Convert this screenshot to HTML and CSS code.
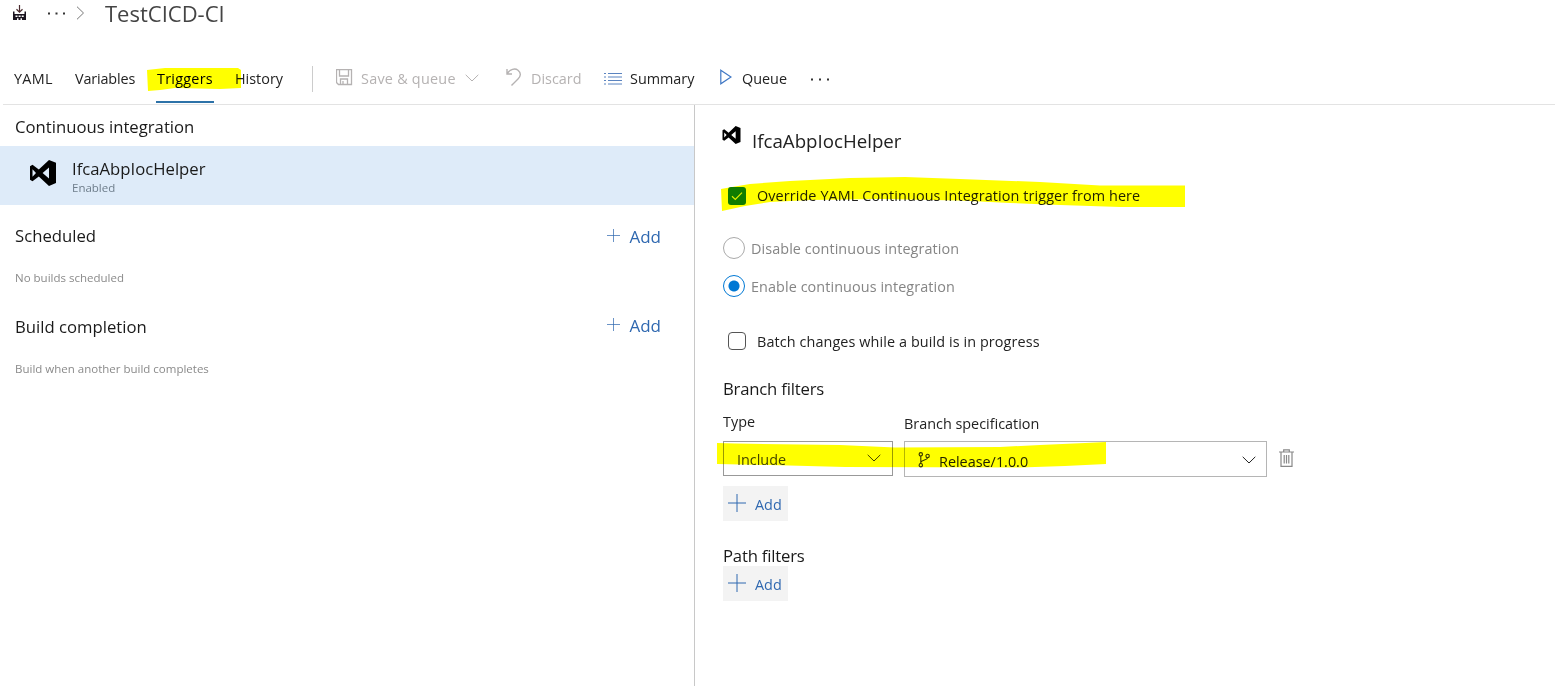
FILE: index.html
```html
<!DOCTYPE html>
<html lang="en">
<head>
<meta charset="utf-8">
<title>TestCICD-CI</title>
<link rel="stylesheet" href="styles.css">
</head>
<body>
<svg class="defs" width="0" height="0">
  <symbol id="vs" viewBox="0 0 26 26"><path fill="#000" fill-rule="evenodd" d="M19 0 26 2.800V23L19 26 8.800 16.600 2.500 21.300 0 19.800V6.200L2.500 4.700 8.800 9.600ZM19 7.500 12.600 13 19 18.500ZM2.500 9.300V16.700L6 13Z"/></symbol>
  <symbol id="plus" viewBox="0 0 18 18"><path d="M9 0V18M0 9H18" fill="none" stroke="currentColor"/></symbol>
  <symbol id="chev" viewBox="0 0 14 8"><path d="M.7.8 7 7 13.3.8" fill="none" stroke="currentColor"/></symbol>
</svg>
<header class="top">
  <div class="crumbs">
    <svg class="factory" width="15" height="16" viewBox="0 0 15 16"><path d="M1 6.500H2.500V9H12.500V6.500H14V15H1Z" fill="#1b1520"/><path d="M3.500 10.500h2v1.500h-2zM6.600 10.500h2v1.500h-2zM9.700 10.500h2v1.500h-2zM5 13.300h1.500V15H5zM8.500 13.300H10V15H8.500z" fill="#fff"/><path d="M7.500 0V7M4.500 4.300 7.500 7.200 10.500 4.300" fill="none" stroke="#4a2a2e" stroke-width="1.200"/></svg>
    <svg class="dots" width="18" height="3" viewBox="0 0 18 3"><path d="M0 .5h2v2H0zM7.500.5h2v2h-2zM15 .5h2v2h-2z" fill="#333"/></svg>
    <svg class="crumb-arrow" width="9" height="14" viewBox="0 0 9 14"><path d="M1 .7 7.500 7 1 13.300" fill="none" stroke="#777"/></svg>
    <h1>TestCICD-CI</h1>
  </div>
  <nav class="tabs">
    <a class="yaml">YAML</a><a class="vars">Variables</a><a class="current">Triggers</a><a>History</a>
    <i class="sep"></i>
    <svg class="up off" width="17" height="17" viewBox="0 0 17 17"><path d="M.5.5H15.500V15.500H2.500L.5 13.500ZM3.500.5V7H12.500V.5M4.500 15V10H11.500V15M7 15V12" fill="none" stroke="currentColor" stroke-width="1.300"/></svg>
    <span class="off save"><span>Save &amp; queue</span><svg width="14" height="8"><use href="#chev"/></svg></span>
    <svg class="up off" width="16" height="18" viewBox="0 0 16 18"><path d="M1 1V6H6M1.200 5.800C4 1 9 0 12 2.200 15.500 5 14.600 8.500 12 11L5.500 17.500" fill="none" stroke="currentColor" stroke-width="1.400"/></svg>
    <span class="off">Discard</span>
    <svg width="19" height="12" viewBox="0 0 19 12"><path d="M0 .5H2M4 .5H18M0 4H2M4 4H18M0 7.500H2M4 7.500H18M0 11H2M4 11H18" stroke="#5b84c0" fill="none"/></svg>
    <span>Summary</span>
    <svg class="up" width="12" height="16" viewBox="0 0 12 16"><path d="M.8 1.200 11 8 .8 14.800Z" fill="none" stroke="#3f77c4" stroke-width="1.200"/></svg>
    <span>Queue</span>
    <svg class="more" width="19" height="3" viewBox="0 0 19 3"><path d="M0 .5h2v2H0zM8 .5h2v2H8zM16 .5h2v2h-2z" fill="#333"/></svg>
  </nav>
</header>
<main>
  <section class="list">
    <div class="row"><h2>Continuous integration</h2></div>
    <div class="selected">
      <svg width="26" height="26"><use href="#vs"/></svg>
      <div class="repo"><span class="repo-name">IfcaAbpIocHelper</span><span class="small state">Enabled</span></div>
    </div>
    <div class="row first"><h2>Scheduled</h2><a class="add"><svg width="13" height="13"><use href="#plus"/></svg>Add</a></div>
    <p class="small">No builds scheduled</p>
    <div class="row second"><h2>Build completion</h2><a class="add"><svg width="13" height="13"><use href="#plus"/></svg>Add</a></div>
    <p class="small">Build when another build completes</p>
  </section>
  <section class="detail">
    <div class="heading"><svg width="19" height="18"><use href="#vs"/></svg><h3>IfcaAbpIocHelper</h3></div>
    <label class="check override"><svg width="18" height="18" viewBox="0 0 18 18"><rect width="18" height="18" rx="3" fill="#107c10"/><path d="M4 9.300 7.300 12.500 14 5.700" fill="none" stroke="#dff0c0" stroke-width="1.200"/></svg><span>Override YAML Continuous Integration trigger from here</span></label>
    <label class="radio dis"><i></i><span>Disable continuous integration</span></label>
    <label class="radio on"><i></i><span>Enable continuous integration</span></label>
    <label class="check batch"><i></i><span>Batch changes while a build is in progress</span></label>
    <h2 class="bf">Branch filters</h2>
    <div class="filters">
      <div class="type"><span class="lbl">Type</span><div class="select inc"><span>Include</span><svg width="14" height="8"><use href="#chev"/></svg></div></div>
      <div class="spec"><span class="lbl">Branch specification</span><div class="select rel"><svg class="branch" width="12" height="16" viewBox="0 0 12 16"><g fill="none" stroke="#333" stroke-width="1.100"><circle cx="2.800" cy="2.300" r="1.700"/><circle cx="9.600" cy="4" r="1.700"/><circle cx="2.800" cy="13.200" r="1.700"/><path d="M2.800 4V11.500M9.600 5.700C9.300 8.500 3.500 7.500 2.800 10.500"/></g></svg><span>Release/1.0.0</span><svg width="14" height="8"><use href="#chev"/></svg></div></div>
      <svg class="trash" width="15" height="18" viewBox="0 0 15 18"><path d="M0 3H15M4.700 3V.8H10.300V3M2 3V17.300H13V3M5.200 6V14.500M7.500 6V14.500M9.800 6V14.500" fill="none" stroke="#888" stroke-width="1.200"/></svg>
    </div>
    <button class="btn"><svg width="18" height="18"><use href="#plus"/></svg>Add</button>
    <h2 class="pf">Path filters</h2>
    <button class="btn"><svg width="18" height="18"><use href="#plus"/></svg>Add</button>
  </section>
</main>
<svg class="marker" width="1555" height="686" viewBox="0 0 1555 686"><g fill="#ff0">
  <path d="M147 70 165 68H238L241 70V88L220 89 175 88 160 90 148 91Z"/>
  <path d="M721 189 732 187 750 184 790 181 850 178 905 177 960 179 1040 182 1100 185.500H1185V207H1120L1060 205 1010 203 960 200.500 880 199 810 200 770 202 745 206 722 211Z"/>
  <path d="M717 443 735 443.500 840 445 895 447.500 1000 447 1040 445 1085 443 1106 442V464L1065 466 1020 467.500 845 467 770 465 717 464Z"/>
</g></svg>
</body>
</html>
```
FILE: styles.css
```css
* { box-sizing: border-box; }
body {
  margin: 0;
  width: 1555px;
  height: 686px;
  overflow: hidden;
  background: #fff;
  color: #222;
  font: 400 14.4px/20px "Open Sans", "Noto Sans", sans-serif;
  position: relative;
}
svg { display: block; flex: none; }
.defs { position: absolute; }
h1, h2, h3, p { margin: 0; font-weight: inherit; }

.crumbs { height: 26px; display: flex; align-items: center; padding-left: 12px; }
.dots { margin-left: 21px; }
.crumb-arrow { margin-left: 10px; }
h1 { margin-left: 20px; font-size: 22px; line-height: 26px; color: #444; }
.tabs {
  height: 51px;
  margin: 28px 0 0 3px;
  padding-left: 11px;
  border-bottom: 1px solid #e3e3e3;
  display: grid;
  grid-template-columns: 61px 82px 78px 77px 24px 25px 145px 25px 73px 26px 90px 22px 69px 30px;
  align-items: center;
}
.yaml { letter-spacing: .3px; }
.vars { letter-spacing: -.15px; }
.current { align-self: stretch; display: flex; align-items: center; position: relative; color: #000; letter-spacing: .25px; }
.current::after { content: ""; position: absolute; left: -1px; bottom: 1px; width: 58px; height: 2px; background: #2d72a8; }
.sep { width: 1px; height: 26px; background: #ccc; }
.off { color: #b5b2b2; }
.save { display: flex; align-items: center; justify-content: space-between; width: 118px; letter-spacing: .25px; }
.save svg { margin-bottom: 2px; }
.up { margin-bottom: 4px; }

main { display: flex; height: 581px; }
.list { width: 695px; border-right: 1px solid #c8c8c8; }
h2 { font-size: 16.7px; line-height: 22px; color: #1a1a1a; }
.row { height: 42px; padding: 0 33px 0 15px; display: flex; align-items: center; justify-content: space-between; }
.list .row:first-child { height: 41px; padding-top: 2px; }
.row.first { margin-top: 10px; }
.row.second { margin-top: 7px; }
.first .add { margin-top: 1px; }
.second .add { margin-bottom: 2px; }
.add { display: flex; align-items: center; gap: 10px; font-size: 17px; color: #2f68b0; }
.add svg { margin-bottom: 3px; margin-right: -1px; }
.selected { height: 59px; background: #deebf9; display: flex; align-items: flex-start; padding: 14px 0 0 30px; gap: 16px; }
.repo { display: flex; flex-direction: column; margin-top: -2px; color: #1a1a1a; }
.repo-name { font-size: 16.7px; line-height: 22px; }
.small { font-size: 11.5px; color: #8a8a8a; }
.state { line-height: 16px; color: #6e7d8b; }
p.small { height: 42px; line-height: 42px; padding-left: 15px; }

.detail { width: 860px; padding-left: 28px; display: flex; flex-direction: column; align-items: flex-start; }
.heading { display: flex; gap: 11px; height: 30px; margin-top: 21px; margin-left: -1px; }
.heading h3 { font-size: 18.7px; line-height: 30px; }
.check { display: flex; align-items: center; height: 20px; margin-left: 5px; gap: 11px; letter-spacing: .1px; }
.check i { width: 18px; height: 18px; border: 1px solid #555; border-radius: 4px; }
.override { margin-top: 30px; }
.radio { display: flex; align-items: center; height: 22px; gap: 6px; color: #858585; letter-spacing: .08px; }
.radio span, .batch span { padding-top: 2px; }
.radio i { width: 22px; height: 22px; border: 1px solid #aaa; border-radius: 50%; }
.dis { margin-top: 31px; }
.on { margin-top: 16px; }
.on i { border-color: #0078d4; background: radial-gradient(circle, #0078d4 5px, #fff 6px); }
.batch { margin-top: 34px; }
.bf { margin-top: 27px; letter-spacing: -.2px; }
.filters { display: flex; align-items: flex-start; margin-top: 11px; height: 66px; }
.type { width: 170px; margin-right: 11px; }
.spec { width: 363px; }
.lbl { display: block; height: 30px; line-height: 21px; }
.spec .lbl { line-height: 25px; }
.select { border: 1px solid #999; display: flex; align-items: center; justify-content: space-between; }
.inc { height: 35px; padding: 2px 11px 0 13px; color: #444; }
.rel { height: 36px; padding: 4px 10px 0 13px; border-color: #b5b5b5; }
.rel span { flex: 1; margin-left: 9px; padding-top: 2px; }
.inc svg, .rel svg { margin-bottom: 3px; }
.trash { margin: 38px 0 0 12px; }
.btn { width: 65px; height: 35px; border: 0; padding: 2px 0 0 5px; background: #f3f3f3; color: #2f68b0; font: inherit; display: flex; align-items: center; gap: 9px; margin-top: 9px; }
.btn svg { margin-bottom: 3px; }
.pf { margin-top: 24px; letter-spacing: -.2px; }
.pf + .btn { margin-top: -1px; }
.marker { position: absolute; left: 0; top: 0; mix-blend-mode: multiply; pointer-events: none; }
```
